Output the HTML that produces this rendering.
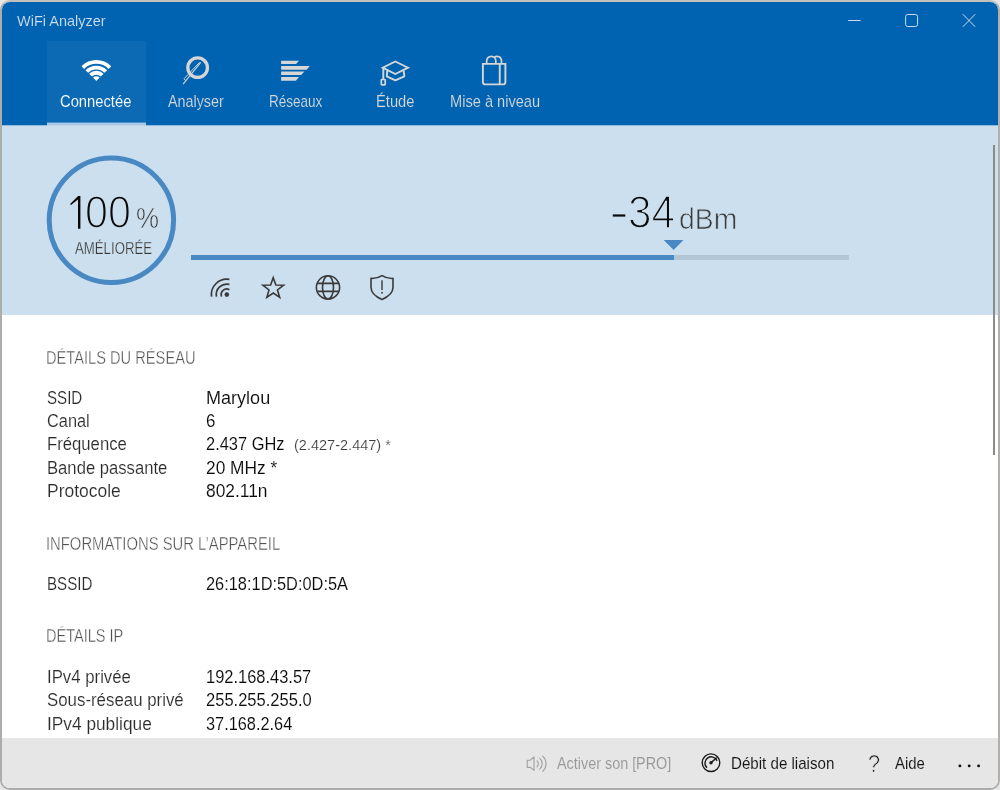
<!DOCTYPE html>
<html lang="fr">
<head>
<meta charset="utf-8">
<title>WiFi Analyzer</title>
<style>
html,body{margin:0;padding:0;}
body{width:1000px;height:790px;overflow:hidden;position:relative;background:#e6e6e6;font-family:"Liberation Sans",sans-serif;}
.win{position:absolute;left:0;top:0;width:996px;height:786px;border-style:solid;border-width:2px;border-color:#c4c0bc #b2aeab #ababab #adadad;border-radius:10px;overflow:hidden;background:#fff;}
.hdr{position:absolute;left:0;top:0;width:996px;height:123px;background:#0063b1;}
.tabsel{position:absolute;left:45px;top:39px;width:99px;height:84px;background:#0c69b4;}
.uline{position:absolute;left:45px;top:120px;width:99px;height:3px;background:linear-gradient(#4d90ca 0,#4d90ca 1px,#a9c9e4 1px,#a9c9e4 3px);}
.hedge{position:absolute;left:0;top:123px;width:996px;height:1px;background:#90bbdc;z-index:2;}
.hedge i{position:absolute;left:45px;top:0;width:99px;height:1px;background:#bcd4e9;}
.panel{position:absolute;left:0;top:123px;width:996px;height:190px;background:#ccdfee;}
.track{position:absolute;left:189px;top:130px;width:658px;height:5px;background:#b3c6d6;}
.fill{position:absolute;left:0;top:0;width:482.6px;height:5px;background:#4889c3;}
.bar{position:absolute;left:0;top:736.3px;width:996px;height:50px;background:#e6e6e6;}
.thumb{position:absolute;left:991px;top:143px;width:2px;height:310px;background:#8a8a8a;}
.layer{position:absolute;left:0;top:0;width:1000px;height:790px;will-change:transform;}
.t{position:absolute;white-space:pre;line-height:1;transform-origin:0 0;}
svg.ico{position:absolute;left:0;top:0;overflow:visible;}
</style>
</head>
<body>
<div class="win">
  <div class="hdr"><div class="tabsel"></div><div class="uline"></div></div>
  <div class="hedge"><i></i></div>
  <div class="panel"><div class="track"><div class="fill"></div></div></div>
  <div class="thumb"></div>
  <div class="bar"></div>
</div>
<div class="layer">
<svg class="ico" width="1000" height="790" viewBox="0 0 1000 790">
<!-- window controls -->
<g fill="none" stroke="#cfdbe8" stroke-width="1">
  <path d="M848.2 20.5H860.6"/>
  <rect x="905.6" y="14.5" width="12" height="12" rx="2.2"/>
  <path d="M962.8 14.2L975.2 26.8M975.2 14.2L962.8 26.8"/>
</g>
<!-- tab: connected wifi (filled fan) -->
<path fill="#ffffff" d="M81.44 66.25A20.9 20.9 0 0 1 111.26 66.25L108.55 68.91A17.1 17.1 0 0 0 84.15 68.91Z M85.51 70.25A15.2 15.2 0 0 1 107.19 70.25L104.55 72.84A11.5 11.5 0 0 0 88.15 72.84Z M89.15 73.82A10.1 10.1 0 0 1 103.55 73.82L100.77 76.55A6.2 6.2 0 0 0 91.93 76.55Z M96.35 80.9L93.00 77.61A4.7 4.7 0 0 1 99.70 77.61Z"/>
<!-- tab: analyser (magnifier) -->
<g fill="none" stroke="#d6d6d6">
  <circle cx="197.65" cy="67.65" r="9.8" stroke-width="3.3"/>
  <path d="M200.8 62.4L183.1 84.2" stroke-width="1.1"/>
  <path d="M199.6 62.3L184.1 78.7L185.5 80.6" stroke-width="1"/>
</g>
<!-- tab: networks (bars) -->
<g fill="#d6d6d6">
  <path d="M281.1 60.8H298.9L296.1 63.9H281.1Z"/>
  <path d="M281.1 66H309.7L306.7 69.8H281.1Z"/>
  <path d="M281.1 71.4H304.4L301.2 75.1H281.1Z"/>
  <path d="M281.1 77.1H299L295.9 80.7H281.1Z"/>
</g>
<!-- tab: study (graduation cap) -->
<g fill="none" stroke="#d6d6d6" stroke-width="1.9" stroke-linejoin="miter">
  <path d="M395.3 61.5L408 67.7L395.3 74L382.7 67.7Z"/>
  <path d="M387.3 70.6L386.8 76.3L395.3 80.4L404.3 76.3L403.7 70.6" stroke-linejoin="round"/>
  <path d="M383.3 67.9V79"/>
  <rect x="381.3" y="79.5" width="3.9" height="5.3" rx="0.6" stroke-width="1.7"/>
</g>
<!-- tab: upgrade (bag) -->
<g fill="none" stroke="#d6d6d6" stroke-width="1.9" stroke-linejoin="miter">
  <path d="M482.9 63.9H505.4V81.9Q505.4 84.4 502.9 84.4H485.4Q482.9 84.4 482.9 81.9Z"/>
  <path d="M499.75 63.9V84.4"/>
  <path d="M486.7 63.9V60.85A4.55 4.55 0 0 1 495.8 60.85V63.9" stroke-width="1.7"/>
  <path d="M494.3 57.2A4.55 4.55 0 0 1 501.5 60.85V63.9" stroke-width="1.7"/>
</g>
<!-- circle gauge -->
<circle cx="111.4" cy="220.2" r="62.2" fill="none" stroke="#4889c3" stroke-width="5"/>
<!-- digit 1 of "100" (light weight) -->
<path d="M70.1 203.9L78.1 195.9H80.4V228.7H78V199.4L71 204.9Z" fill="#0a0a0a"/>
<!-- minus sign of "-34" -->
<rect x="612.8" y="214.4" width="12.5" height="2.2" fill="#0a0a0a"/>
<!-- slider pointer -->
<path d="M663.7 240H683.5L673.6 250Z" fill="#4889c3"/>
<!-- panel icons -->
<g fill="none" stroke="#3a3a3a" stroke-width="1.6" stroke-linecap="round" stroke-linejoin="miter">
  <!-- signal -->
  <path d="M221.57 296.60A5.6 5.6 0 0 1 229.40 289.64" stroke-linecap="butt" stroke-width="1.7"/>
  <path d="M216.49 296.60A10.5 10.5 0 0 1 229.40 284.43" stroke-linecap="butt" stroke-width="1.7"/>
  <path d="M211.53 296.60A15.4 15.4 0 0 1 229.40 279.42" stroke-linecap="butt" stroke-width="1.7"/>
  <!-- star -->
  <path d="M273.25 277.70L275.87 285.00L283.62 285.23L277.48 289.98L279.66 297.42L273.25 293.05L266.84 297.42L269.02 289.98L262.88 285.23L270.63 285.00Z" stroke-width="1.6" stroke-miterlimit="10"/>
  <!-- globe -->
  <circle cx="328" cy="287.4" r="11.6"/>
  <ellipse cx="328" cy="287.4" rx="5.5" ry="11.6"/>
  <path d="M317.2 283.4H338.8M317.2 291.4H338.8" stroke-linecap="butt"/>
  <!-- shield -->
  <path d="M382 275.6C378.6 277.8 375 278.6 371 278.4V287.2C371 292.4 375 296.4 382 299.4C389 296.4 393 292.4 393 287.2V278.4C389 278.6 385.4 277.8 382 275.6Z" stroke-linejoin="round"/>
  <path d="M382 280.2V290" stroke-linecap="butt" stroke-width="1.4"/>
</g>
<circle cx="226.8" cy="294.6" r="2.3" fill="#3a3a3a"/>
<circle cx="382" cy="292.8" r="0.95" fill="#3a3a3a"/>
<!-- bottom bar: speaker -->
<g fill="none" stroke="#a0a0a0" stroke-width="1.1" stroke-linejoin="round" stroke-linecap="round">
  <path d="M527.2 760.2H530.4L534 756.8V770.4L530.4 767.4H527.2Z"/>
  <path d="M537 760.8A4 4 0 0 1 537 766.8"/>
  <path d="M539.8 758.4A7.4 7.4 0 0 1 539.8 769.2"/>
  <path d="M542.8 756.2A10.6 10.6 0 0 1 542.8 771.4"/>
</g>
<!-- bottom bar: gauge -->
<g fill="none" stroke="#1a1a1a" stroke-width="1.4" stroke-linecap="round">
  <circle cx="711" cy="762.7" r="8.8"/>
  <path d="M706.6 767.2A6.2 6.2 0 1 1 716.8 760.4"/>
  <path d="M711.4 762.4L716.4 758"/>
</g>
<circle cx="711" cy="762.8" r="1.7" fill="#1a1a1a"/>
<!-- more dots -->
<g fill="#111"><circle cx="959.9" cy="765.9" r="1.45"/><circle cx="969.2" cy="765.9" r="1.45"/><circle cx="978.6" cy="765.9" r="1.45"/></g>

</svg>
<span class="t" style="left:16.88px;top:14.07px;font-size:14.8px;color:#d3deeb;transform:scaleX(0.9798);-webkit-text-stroke:0.12px #0063b1;">WiFi Analyzer</span>
<span class="t" style="left:60.11px;top:92.80px;font-size:16.3px;color:#ffffff;transform:scaleX(0.9061);-webkit-text-stroke:0.12px #0c69b4;">Connectée</span>
<span class="t" style="left:168.00px;top:92.80px;font-size:16.3px;color:#d9d9d9;transform:scaleX(0.8808);-webkit-text-stroke:0.12px #0063b1;">Analyser</span>
<span class="t" style="left:268.86px;top:92.80px;font-size:16.3px;color:#d9d9d9;transform:scaleX(0.8287);-webkit-text-stroke:0.12px #0063b1;">Réseaux</span>
<span class="t" style="left:375.76px;top:92.80px;font-size:16.3px;color:#d9d9d9;transform:scaleX(0.9037);-webkit-text-stroke:0.12px #0063b1;">Étude</span>
<span class="t" style="left:449.77px;top:92.80px;font-size:16.3px;color:#d9d9d9;transform:scaleX(0.8968);-webkit-text-stroke:0.12px #0063b1;">Mise à niveau</span>
<span class="t" style="left:84.83px;top:189.22px;font-size:46.4px;color:#0a0a0a;transform:scaleX(0.8898);-webkit-text-stroke:1.6px #ccdfee;">00</span>
<span class="t" style="left:135.71px;top:204.15px;font-size:29px;color:#3a3a3a;transform:scaleX(0.8926);-webkit-text-stroke:0.6px #ccdfee;">%</span>
<span class="t" style="left:75.40px;top:239.79px;font-size:16.2px;color:#3a3a3a;transform:scaleX(0.8160);-webkit-text-stroke:0.25px #ccdfee;">AMÉLIORÉE</span>
<span class="t" style="left:628.00px;top:189.42px;font-size:46.4px;color:#0a0a0a;transform:scaleX(0.9134);-webkit-text-stroke:1.6px #ccdfee;">34</span>
<span class="t" style="left:679.34px;top:203.07px;font-size:30.4px;color:#3a3a3a;transform:scaleX(0.9316);-webkit-text-stroke:0.75px #ccdfee;">dBm</span>
<span class="t" style="left:46.48px;top:348.66px;font-size:18.0px;color:#4f4f4f;transform:scaleX(0.8138);-webkit-text-stroke:0.38px #fff;">DÉTAILS DU RÉSEAU</span>
<span class="t" style="left:46.36px;top:534.76px;font-size:18.0px;color:#4f4f4f;transform:scaleX(0.8234);-webkit-text-stroke:0.38px #fff;">INFORMATIONS SUR L’APPAREIL</span>
<span class="t" style="left:46.49px;top:627.16px;font-size:18.0px;color:#4f4f4f;transform:scaleX(0.8075);-webkit-text-stroke:0.38px #fff;">DÉTAILS IP</span>
<span class="t" style="left:46.95px;top:389.26px;font-size:18.0px;color:#2b2b2b;transform:scaleX(0.8401);-webkit-text-stroke:0.15px #fff;">SSID</span>
<span class="t" style="left:46.95px;top:412.26px;font-size:18.0px;color:#2b2b2b;transform:scaleX(0.9079);-webkit-text-stroke:0.15px #fff;">Canal</span>
<span class="t" style="left:46.95px;top:435.46px;font-size:18.0px;color:#2b2b2b;transform:scaleX(0.9273);-webkit-text-stroke:0.15px #fff;">Fréquence</span>
<span class="t" style="left:46.95px;top:458.76px;font-size:18.0px;color:#2b2b2b;transform:scaleX(0.9250);-webkit-text-stroke:0.15px #fff;">Bande passante</span>
<span class="t" style="left:46.95px;top:482.06px;font-size:18.0px;color:#2b2b2b;transform:scaleX(0.9708);-webkit-text-stroke:0.15px #fff;">Protocole</span>
<span class="t" style="left:46.95px;top:575.46px;font-size:18.0px;color:#2b2b2b;transform:scaleX(0.8405);-webkit-text-stroke:0.15px #fff;">BSSID</span>
<span class="t" style="left:46.95px;top:667.96px;font-size:18.0px;color:#2b2b2b;transform:scaleX(0.9317);-webkit-text-stroke:0.15px #fff;">IPv4 privée</span>
<span class="t" style="left:46.95px;top:691.26px;font-size:18.0px;color:#2b2b2b;transform:scaleX(0.9360);-webkit-text-stroke:0.15px #fff;">Sous-réseau privé</span>
<span class="t" style="left:46.95px;top:714.56px;font-size:18.0px;color:#2b2b2b;transform:scaleX(0.9603);-webkit-text-stroke:0.15px #fff;">IPv4 publique</span>
<span class="t" style="left:205.90px;top:389.26px;font-size:18.0px;color:#0a0a0a;transform:scaleX(1.0024);-webkit-text-stroke:0.1px #fff;">Marylou</span>
<span class="t" style="left:205.90px;top:412.26px;font-size:18.0px;color:#0a0a0a;transform:scaleX(0.9405);-webkit-text-stroke:0.1px #fff;">6</span>
<span class="t" style="left:205.90px;top:435.46px;font-size:18.0px;color:#0a0a0a;transform:scaleX(0.9128);-webkit-text-stroke:0.1px #fff;">2.437 GHz</span>
<span class="t" style="left:293.63px;top:438.24px;font-size:14.6px;color:#3c3c3c;transform:scaleX(0.9953);-webkit-text-stroke:0.15px #fff;">(2.427-2.447) *</span>
<span class="t" style="left:205.90px;top:458.76px;font-size:18.0px;color:#0a0a0a;transform:scaleX(0.9627);-webkit-text-stroke:0.1px #fff;">20 MHz *</span>
<span class="t" style="left:205.90px;top:482.06px;font-size:18.0px;color:#0a0a0a;transform:scaleX(0.9648);-webkit-text-stroke:0.1px #fff;">802.11n</span>
<span class="t" style="left:205.90px;top:575.46px;font-size:18.0px;color:#0a0a0a;transform:scaleX(0.9096);-webkit-text-stroke:0.1px #fff;">26:18:1D:5D:0D:5A</span>
<span class="t" style="left:205.90px;top:667.96px;font-size:18.0px;color:#0a0a0a;transform:scaleX(0.9138);-webkit-text-stroke:0.1px #fff;">192.168.43.57</span>
<span class="t" style="left:205.90px;top:691.26px;font-size:18.0px;color:#0a0a0a;transform:scaleX(0.9180);-webkit-text-stroke:0.1px #fff;">255.255.255.0</span>
<span class="t" style="left:205.90px;top:714.56px;font-size:18.0px;color:#0a0a0a;transform:scaleX(0.9067);-webkit-text-stroke:0.1px #fff;">37.168.2.64</span>
<span class="t" style="left:557.00px;top:755.20px;font-size:16.3px;color:#989898;transform:scaleX(0.8833);-webkit-text-stroke:0.06px #e6e6e6;">Activer son [PRO]</span>
<span class="t" style="left:731.12px;top:755.20px;font-size:16.3px;color:#151515;transform:scaleX(0.9284);-webkit-text-stroke:0.06px #e6e6e6;">Débit de liaison</span>
<span class="t" style="left:868.49px;top:751.95px;font-size:23.8px;color:#1a1a1a;transform:scaleX(0.9143);-webkit-text-stroke:0.6px #e6e6e6;">?</span>
<span class="t" style="left:894.70px;top:755.20px;font-size:16.3px;color:#151515;transform:scaleX(0.9161);-webkit-text-stroke:0.06px #e6e6e6;">Aide</span>
</div>
</body>
</html>
